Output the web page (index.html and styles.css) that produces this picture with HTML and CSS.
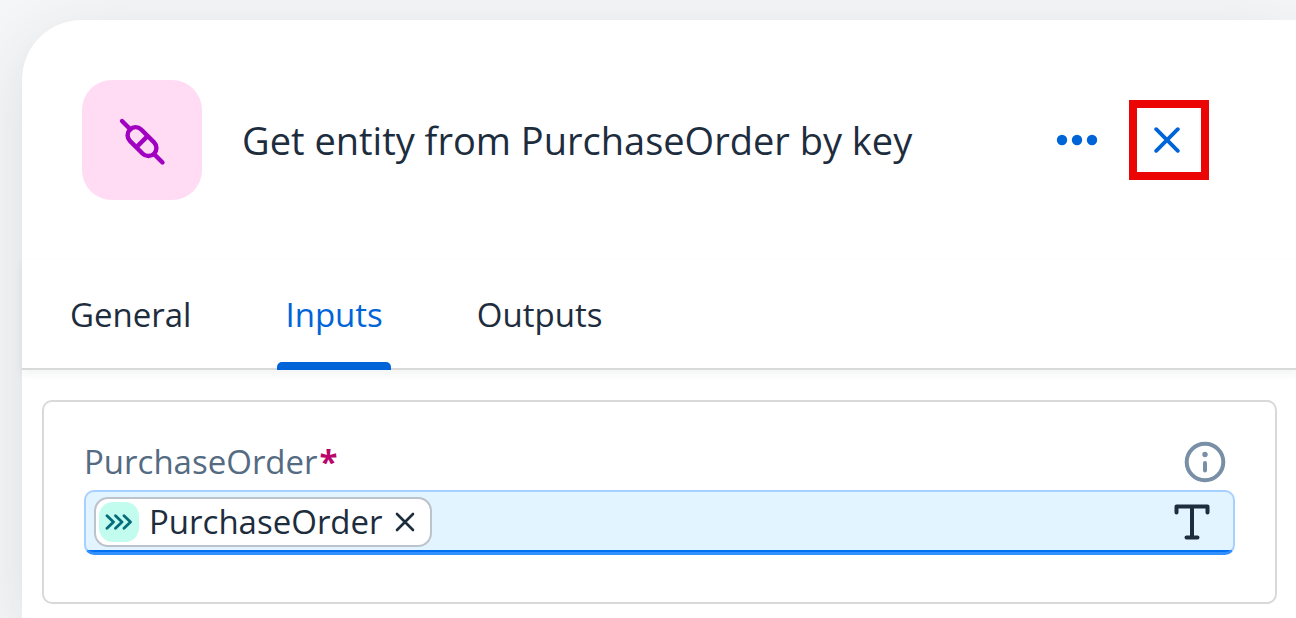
FILE: index.html
```html
<!DOCTYPE html>
<html lang="en">
<head>
<meta charset="utf-8">
<title>Get entity from PurchaseOrder by key</title>
<link rel="stylesheet" href="styles.css">
</head>
<body>
<main class="panel">
  <header class="header">
    <span class="badge">
      <svg class="badge-icon" viewBox="0 0 64 64" fill="none" stroke="#a100c2" stroke-width="4.4" stroke-linecap="round" aria-hidden="true">
        <path d="M12 13 20.500 21.500M44 46 52.500 54.500"/>
        <rect x="14.900" y="25.600" width="34.200" height="16" rx="8" transform="rotate(45 32 33.600)"/>
        <path d="M37 28.600 27 38.600"/>
      </svg>
    </span>
    <h1 class="title">Get entity from PurchaseOrder by key</h1>
    <div class="actions">
      <button class="icon-button" type="button" aria-label="More">
        <svg class="more-icon" viewBox="0 0 42 12" fill="#0064d9" aria-hidden="true"><circle cx="6" cy="6" r="5.200"/><circle cx="21" cy="6" r="5.200"/><circle cx="36" cy="6" r="5.200"/></svg>
      </button>
      <button class="icon-button close" type="button" aria-label="Close">
        <svg class="close-icon" viewBox="0 0 26 26" fill="none" stroke="#0064d9" stroke-width="3.800" stroke-linecap="round" aria-hidden="true"><path d="M2.200 2.200 23.800 23.800M23.800 2.200 2.200 23.800"/></svg>
      </button>
    </div>
  </header>
  <nav class="tabs" role="tablist">
    <button class="tab" type="button" role="tab">General</button>
    <button class="tab selected" type="button" role="tab" aria-selected="true">Inputs</button>
    <button class="tab" type="button" role="tab">Outputs</button>
  </nav>
  <section class="card">
    <div class="label-row">
      <label class="label" for="purchase-order">PurchaseOrder<span class="required">*</span></label>
      <button class="icon-button" type="button" aria-label="Information">
        <svg class="info-icon" viewBox="0 0 42 42" fill="none" stroke="#788fa6" stroke-width="4" stroke-linecap="round" aria-hidden="true"><circle cx="21" cy="21" r="18.300"/><path d="M21 22V29.500"/><circle cx="21" cy="13.500" r="2.700" fill="#788fa6" stroke="none"/></svg>
      </button>
    </div>
    <div class="field">
      <span class="token">
        <span class="token-badge">
          <svg class="token-icon" viewBox="0 0 28 16" fill="none" stroke="#046c7a" stroke-width="2.800" stroke-linecap="round" stroke-linejoin="round" aria-hidden="true"><path d="M2 1.800 8.500 8 2 14.200M10.500 1.800 17 8 10.500 14.200M19 1.800 25.500 8 19 14.200"/></svg>
        </span>
        <span class="token-text">PurchaseOrder</span>
        <button class="icon-button remove" type="button" aria-label="Remove PurchaseOrder">
          <svg class="remove-icon" viewBox="0 0 20 20" fill="none" stroke="#1d2d3e" stroke-width="2.600" stroke-linecap="round" aria-hidden="true"><path d="M2 2 18 18M18 2 2 18"/></svg>
        </button>
      </span>
      <input class="field-input" id="purchase-order" type="text">
      <svg class="type-icon" viewBox="0 0 36 36" fill="none" stroke="#1d2d3e" stroke-width="4" stroke-linecap="round" stroke-linejoin="round" aria-hidden="true"><path d="M2.500 8.500V2.500H33.500V8.500M18 3V33.500M12.500 33.500H23.500"/></svg>
    </div>
  </section>
</main>
</body>
</html>
```
FILE: styles.css
```css
* {
  box-sizing: border-box;
}

body {
  margin: 0;
  min-height: 100vh;
  display: flex;
  padding: 20px 0 0 22px;
  overflow: hidden;
  background: #f5f6f7;
  color: #1d2d3e;
  font-family: "Open Sans", "Noto Sans", sans-serif;
  font-size: 33px;
  line-height: 44px;
}

button {
  margin: 0;
  padding: 0;
  border: 0;
  background: none;
  color: inherit;
  font: inherit;
}

svg {
  display: block;
}

.panel {
  flex: 1;
  min-width: 0;
  border-top-left-radius: 60px;
  background: #fff;
  box-shadow: 0 16px 64px rgba(34, 53, 72, 0.12);
}

.header {
  display: flex;
  align-items: center;
  gap: 40px;
  padding: 60px 87px 60px 60px;
}

.badge {
  flex: none;
  display: grid;
  place-items: center;
  width: 120px;
  height: 120px;
  border-radius: 30px;
  background: #ffdcf3;
}

.badge-icon {
  width: 64px;
  height: 64px;
}

.title {
  flex: 1;
  margin: 0;
  font-size: 38px;
  font-weight: 400;
  line-height: 48px;
  white-space: nowrap;
}

.actions {
  display: flex;
  align-items: center;
  gap: 31px;
}

.icon-button {
  flex: none;
  display: grid;
  place-items: center;
}

.more-icon {
  width: 42px;
  height: 12px;
}

.close {
  width: 80px;
  height: 80px;
  padding-right: 4px;
  border: 8px solid #eb0505;
}

.close-icon {
  width: 26px;
  height: 26px;
}

.tabs {
  display: flex;
  gap: 78px;
  padding: 0 40px;
  border-bottom: 2px solid #d9d9d9;
  box-shadow: 0 4px 8px rgba(34, 53, 72, 0.06);
}

.tab {
  margin-bottom: -2px;
  padding: 33px 8px;
  position: relative;
}

.selected {
  color: #0064d9;
}

.selected::after {
  content: "";
  position: absolute;
  inset: auto 0 0;
  height: 8px;
  border-radius: 5px 5px 0 0;
  background: #0064d9;
}

.card {
  margin: 30px 19px 14px 20px;
  padding: 38px 40px 47px;
  border: 2px solid #d9d9d9;
  border-radius: 10px;
}

.label-row {
  display: flex;
  align-items: center;
  justify-content: space-between;
  padding: 0 9px 6px 0;
}

.label {
  color: #556b82;
}

.required {
  margin-left: 2px;
  color: #ba066c;
  font-weight: 700;
}

.info-icon {
  width: 42px;
  height: 42px;
}

.field {
  display: flex;
  align-items: center;
  height: 65px;
  padding: 0 23px 0 8px;
  border: 2px solid #a6d0ff;
  border-bottom: 3px solid #3390ff;
  border-radius: 10px;
  background: linear-gradient(#0070f2, #0070f2) bottom / 100% 2px no-repeat #e1f4ff;
}

.token {
  display: flex;
  align-items: center;
  gap: 10px;
  height: 50px;
  padding: 0 15px 0 3px;
  border: 2px solid #bcc3ca;
  border-radius: 14px;
  background: #fff;
}

.token-badge {
  display: grid;
  place-items: center;
  width: 40px;
  height: 40px;
  border-radius: 14px;
  background: #c2fcee;
}

.token-icon {
  width: 28px;
  height: 16px;
}

.remove {
  margin-left: 2px;
}

.remove-icon {
  width: 20px;
  height: 20px;
}

.field-input {
  flex: 1;
  min-width: 0;
  height: 50px;
  padding: 0 8px;
  border: 0;
  outline: 0;
  background: transparent;
  color: inherit;
  font: inherit;
}

.type-icon {
  flex: none;
  width: 36px;
  height: 36px;
}
```
